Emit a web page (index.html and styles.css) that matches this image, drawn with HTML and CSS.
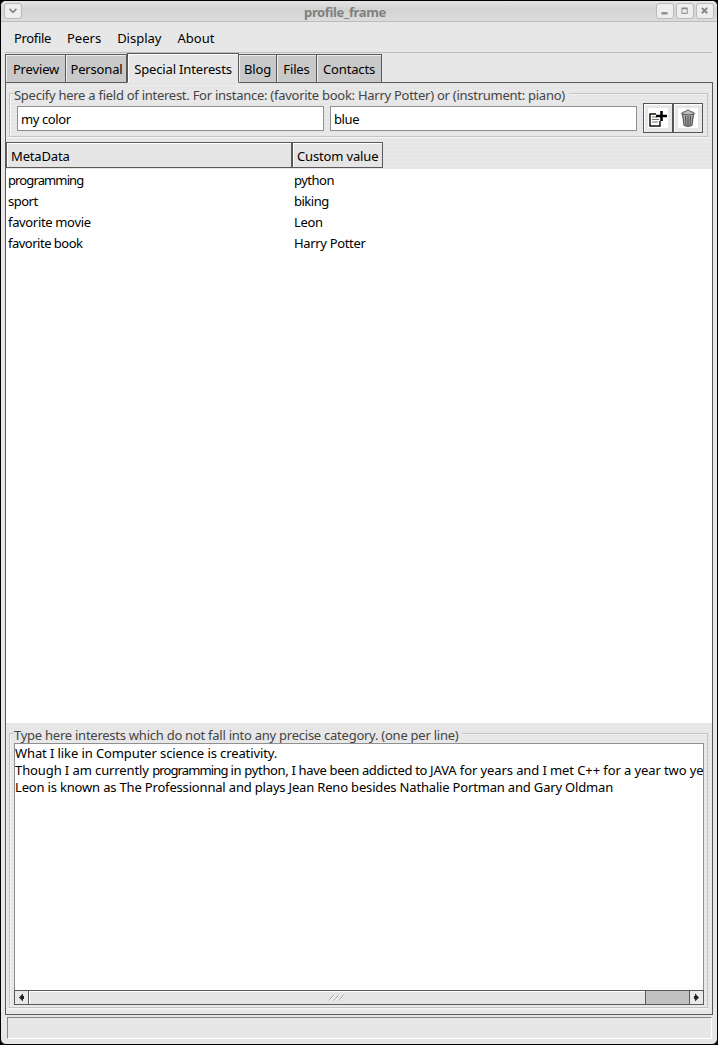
FILE: index.html
```
<!DOCTYPE html>
<html lang="en">
<head>
<meta charset="utf-8">
<title>profile_frame</title>
<link rel="stylesheet" href="styles.css">
</head>
<body>
<div class="window">
  <header class="titlebar">
    <span class="winbtn"><svg width="19" height="16" viewBox="0 0 19 16"><path d="M5.500 5.500 9.500 9.500 13.500 5.500" fill="none" stroke="#858585" stroke-width="2"/></svg></span>
    <h1 class="title">profile_frame</h1>
    <span class="winbtns">
      <span class="winbtn"><svg width="18" height="16" viewBox="0 0 18 16"><path d="M5 9h7v3H5z" fill="#929292"/></svg></span>
      <span class="winbtn"><svg width="18" height="16" viewBox="0 0 18 16"><path d="M5 4h7v7H5zM6 6v4h5V6z" fill="#858585" fill-rule="evenodd"/></svg></span>
      <span class="winbtn"><svg width="18" height="16" viewBox="0 0 18 16"><path d="M5.500 4.500 11.500 10.500M11.500 4.500 5.500 10.500" stroke="#858585" stroke-width="2.200"/></svg></span>
    </span>
  </header>
  <nav class="menu">
    <span class="snug">Profile</span><span>Peers</span><span>Display</span><span>About</span>
  </nav>
  <div class="tabs">
    <div class="tab tab-preview">Preview</div>
    <div class="tab tab-personal">Personal</div>
    <div class="tab tab-interests active">Special Interests</div>
    <div class="tab tab-blog">Blog</div>
    <div class="tab tab-files">Files</div>
    <div class="tab tab-contacts">Contacts</div>
  </div>
  <main class="page">
    <section class="group group-add">
      <div class="legend">Specify here a field of interest. For instance: (favorite book: Harry Potter) or (instrument: piano)</div>
      <div class="entry-row">
        <div class="entry">my color</div>
        <div class="entry">blue</div>
        <div class="tools">
          <div class="tool"><svg width="20" height="20" viewBox="0 0 20 20"><path d="M0 0h20v20H0z" fill="#fff"/><path d="M8 6H2v12h10v-5" fill="none" stroke="#111" stroke-width="1.500"/><path d="M4 9h5M4 11.500h7M4 14h6" stroke="#777760"/><path d="M8 8h11M13.500 3v10" stroke="#000" stroke-width="2.600"/></svg></div>
          <div class="tool"><svg width="20" height="20" viewBox="0 0 20 20"><path d="M0 0h20v20H0z" fill="#fff"/><path d="M4.500 6 6 17.500q4 2 8 0L15.500 6z" fill="#aaa" stroke="#444"/><path d="M7.500 8l.5 9M10 8v10M12.500 8l-.5 9" stroke="#555" stroke-width="1.200"/><path d="M3.500 6q0-2 4-2.500Q8 2 10 2t2.500 1.500q4 .5 4 2.500-6 2-13 0z" fill="#bbb" stroke="#555"/></svg></div>
        </div>
      </div>
    </section>
    <section class="list">
      <div class="list-head"><div class="col col-a">MetaData</div><div class="col col-b">Custom value</div></div>
      <div class="rows">
        <div class="row"><span class="tightest">programming</span><span class="tight">python</span></div>
        <div class="row"><span class="tight">sport</span><span class="tight">biking</span></div>
        <div class="row"><span class="snug">favorite movie</span><span class="snug">Leon</span></div>
        <div class="row"><span class="tight">favorite book</span><span class="snug">Harry Potter</span></div>
      </div>
    </section>
    <section class="group group-notes">
      <div class="legend">Type here interests which do not fall into any precise category. (one per line)</div>
      <div class="notes">
        <p>What I like in Computer science is creativity.</p>
        <p>Though I am currently <span class="tightest">programming</span><span class="snug"> in python, I have been addicted to </span>JAVA for years and I met C++ for a year two years</p>
        <p class="note-last">Leon is known as The Professionnal and plays Jean Reno besides Nathalie Portman and Gary Oldman</p>
      </div>
      <div class="scrollbar">
        <div class="arrow"><svg width="13" height="13" viewBox="0 0 13 13"><path d="M4 6.500 8 2.500V5h1v3H8v2.500z" fill="#222"/></svg></div>
        <div class="thumb"><svg width="18" height="7" viewBox="0 0 18 7"><path d="M1 6.500 6 .5M6 6.500 11 .5M11 6.500 16 .5" stroke="#999"/><path d="M2 6.500 7 .5M7 6.500 12 .5M12 6.500 17 .5" stroke="#fff"/></svg></div>
        <div class="trough"></div>
        <div class="arrow"><svg width="13" height="13" viewBox="0 0 13 13"><path d="M9 6.500 5 2.500V5H4v3h1v2.500z" fill="#222"/></svg></div>
      </div>
    </section>
  </main>
  <footer class="status"></footer>
</div>
</body>
</html>
```
FILE: styles.css
```
* { box-sizing: border-box; }
body { margin: 0; background: #000; color: #000; font: 13px/17px "Noto Sans", sans-serif; }
p, h1 { margin: 0; }
svg { display: block; }
.snug { letter-spacing: -.34px; }
.tight { letter-spacing: -.5px; }
.tightest { letter-spacing: -.88px; }
.window { height: 1045px; display: flex; flex-direction: column; border: 1px solid #000; border-radius: 6px; background: #e7e7e7; overflow: hidden; }
.titlebar { height: 21px; flex: none; display: flex; align-items: center; justify-content: space-between; padding: 0 3px; border-bottom: 1px solid #bcbcbc; background: linear-gradient(#e5e5e5, #d3d3d3 40%, #dcdcdc); }
.title { flex: 1; text-align: center; font-size: 13px; color: #808080; padding: 2px 0 0 12px; letter-spacing: -.36px; }
.winbtns { display: flex; gap: 2px; }
.winbtn { width: 18px; height: 16px; border: 1px solid #bdb9bd; border-radius: 3px; background: #eee; display: flex; align-items: center; justify-content: center; }
.menu { height: 31px; flex: none; margin: 0 5px 0 4px; padding: 8px 0 0 9px; border-bottom: 1px solid #bdbabd; display: flex; gap: 16px; }
.tabs { flex: none; display: flex; align-items: flex-end; height: 30px; margin-left: 4px; position: relative; z-index: 1; }
.tab { height: 29px; padding-top: 2px; border: 1px solid #595959; border-left-width: 0; background: #c9c9c9; box-shadow: inset 1px 1px #eee; display: flex; align-items: center; justify-content: center; white-space: nowrap; letter-spacing: -.15px; }
.tab-preview { width: 61px; border-left-width: 1px; padding-left: 1px; }
.tab-personal { width: 61px; padding-left: 1px; }
.tab-interests { width: 112px; }
.tab-blog { width: 38px; }
.tab-files { width: 40px; }
.tab-contacts { width: 65px; }
.tab.active { height: 30px; border-left-width: 1px; border-bottom-color: #e7e7e7; background: #e7e7e7; box-shadow: inset 1px 1px #fff; }
.page { flex: none; height: 933px; margin: -1px 4px 0; border: 1px solid #595959; display: flex; flex-direction: column; background: repeating-linear-gradient(#e5e5e5 0 2px, #e9e9e9 2px 4px); }
.group { margin: 0 4px 0 3px; border: 1px solid #c3c3c3; box-shadow: inset 1px 1px #f5f5f5, 0 1px #f5f5f5; }
.group-add { margin-top: 10px; height: 44px; }
.legend { display: table; margin-left: 4px; padding-right: 4px; height: 13px; line-height: 13px; background: #e7e7e7; color: #444; white-space: nowrap; margin-top: -5px; letter-spacing: -.265px; }
.group-notes .legend { letter-spacing: -.25px; }
.entry-row { display: flex; align-items: center; padding: 1px 4px 0 7px; }
.entry { width: 307px; height: 25px; margin-right: 6px; padding: 4px 4px 0 3px; border: 1px solid #8f8f8f; background: #fff; line-height: 16px; letter-spacing: -.4px; }
.tools { display: flex; }
.tool { width: 30px; height: 30px; border: 1px solid #555; box-shadow: inset 1px 1px #fff; display: flex; align-items: center; justify-content: center; }
.list { margin-top: 5px; height: 581px; display: flex; flex-direction: column; }
.list-head { display: flex; height: 27px; align-items: flex-start; }
.col { height: 26px; border: 1px solid #595959; box-shadow: inset 1px 1px #fff; padding: 5px 4px; line-height: 17px; background: #e5e5e5; letter-spacing: -.15px; }
.col-a { width: 286px; }
.col-b { width: 91px; white-space: nowrap; }
.rows { flex: 1; background: #fefefe; padding-top: 1px; overflow: hidden; }
.row { display: grid; grid-template-columns: 286px 1fr; padding-left: 2px; height: 21px; line-height: 21px; justify-items: start; }
.group-notes { margin-top: 10px; height: 275px; }
.notes { height: 248px; margin: 1px 3px 0 4px; border: 1px solid #8f8f8f; background: #fefefe; padding: 1px 0 0; white-space: nowrap; overflow: hidden; letter-spacing: -.1px; }
.note-last { letter-spacing: -.175px; }
.scrollbar { display: flex; margin: -1px 3px 0 4px; height: 15px; border: 1px solid #595959; background: #c1c1c1; }
.arrow { width: 13px; background: #e9e9e9; }
.thumb { width: 618px; border: solid #595959; border-width: 0 1px; background: #e5e5e5; box-shadow: inset 1px 1px #fff; display: flex; align-items: center; justify-content: center; }
.trough { flex: 1; border-right: 1px solid #595959; }
.status { height: 22px; margin: 2px 5px 0 6px; border: 1px solid #858585; border-right-color: #fff; border-bottom-color: #fff; }
```
